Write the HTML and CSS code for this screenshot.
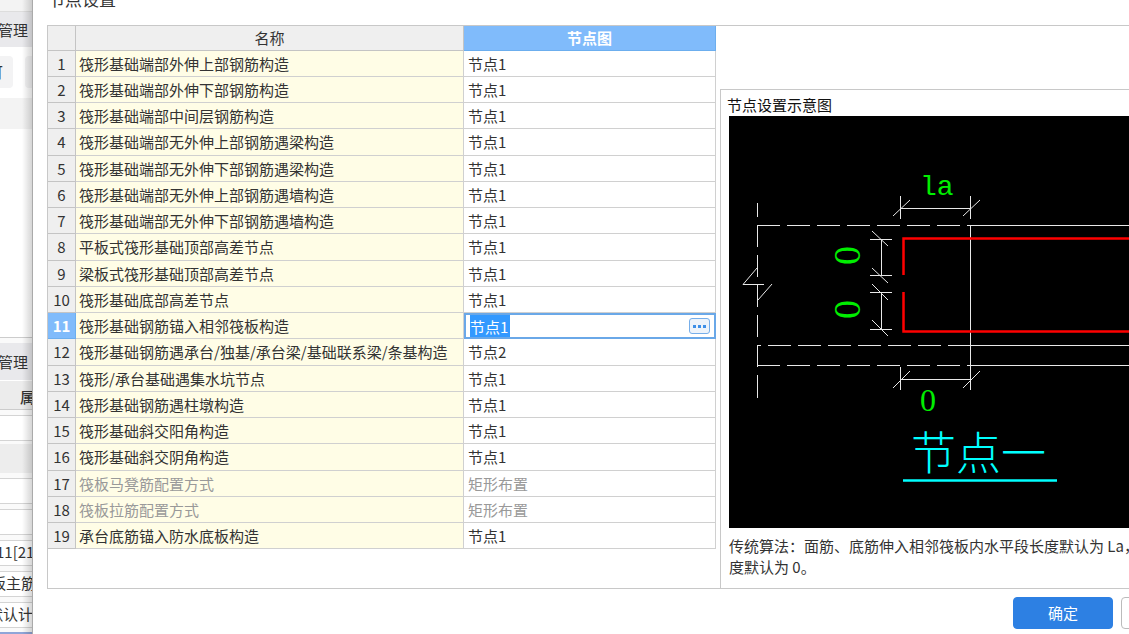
FILE: index.html
```html
<!DOCTYPE html>
<html lang="zh-CN">
<head>
<meta charset="utf-8">
<title>节点设置</title>
<link rel="stylesheet" href="styles.css">
</head>
<body>
<div class="app">
  <aside class="side">
    <div class="side-top"></div>
    <div class="side-title">管理</div>
    <div class="side-tabs"><span class="tab">可</span><span class="tab"></span></div>
    <div class="side-band"></div>
    <div class="side-space"></div>
    <div class="side-title side-title-low">管理</div>
    <div class="side-head">属</div>
    <div class="prop"></div>
    <div class="prop prop-gray"></div>
    <div class="prop"></div>
    <div class="prop"></div>
    <div class="prop prop-num">11[21]</div>
    <div class="prop prop-bar">板主筋</div>
    <div class="prop prop-calc">默认计算</div>
    <div class="side-end"></div>
  </aside>
  <main class="dialog">
    <header class="dialog-head"><h1 class="dialog-title">节点设置</h1></header>
    <section class="frame">
      <table class="grid">
        <colgroup><col class="col-no"><col class="col-name"><col class="col-node"></colgroup>
        <thead><tr><th></th><th>名称</th><th class="active">节点图</th></tr></thead>
        <tbody>
          <tr><th>1</th><td>筏形基础端部外伸上部钢筋构造</td><td>节点1</td></tr>
          <tr><th>2</th><td>筏形基础端部外伸下部钢筋构造</td><td>节点1</td></tr>
          <tr><th>3</th><td>筏形基础端部中间层钢筋构造</td><td>节点1</td></tr>
          <tr><th>4</th><td>筏形基础端部无外伸上部钢筋遇梁构造</td><td>节点1</td></tr>
          <tr><th>5</th><td>筏形基础端部无外伸下部钢筋遇梁构造</td><td>节点1</td></tr>
          <tr><th>6</th><td>筏形基础端部无外伸上部钢筋遇墙构造</td><td>节点1</td></tr>
          <tr><th>7</th><td>筏形基础端部无外伸下部钢筋遇墙构造</td><td>节点1</td></tr>
          <tr><th>8</th><td>平板式筏形基础顶部高差节点</td><td>节点1</td></tr>
          <tr><th>9</th><td>梁板式筏形基础顶部高差节点</td><td>节点1</td></tr>
          <tr><th>10</th><td>筏形基础底部高差节点</td><td>节点1</td></tr>
          <tr><th class="active">11</th><td>筏形基础钢筋锚入相邻筏板构造</td><td class="edit"><div class="editor"><input class="edit-input" type="text" value="节点1" aria-label="节点图"><button class="more" type="button" aria-label="更多"><svg width="13" height="3" viewBox="0 0 13 3"><path d="M0 0h3v3H0zM5 0h3v3H5zM10 0h3v3h-3z" fill="#3d8fe8"/></svg></button></div></td></tr>
          <tr><th>12</th><td>筏形基础钢筋遇承台/独基/承台梁/基础联系梁/条基构造</td><td>节点2</td></tr>
          <tr><th>13</th><td>筏形/承台基础遇集水坑节点</td><td>节点1</td></tr>
          <tr><th>14</th><td>筏形基础钢筋遇柱墩构造</td><td>节点1</td></tr>
          <tr><th>15</th><td>筏形基础斜交阳角构造</td><td>节点1</td></tr>
          <tr><th>16</th><td>筏形基础斜交阴角构造</td><td>节点1</td></tr>
          <tr class="off"><th>17</th><td>筏板马凳筋配置方式</td><td>矩形布置</td></tr>
          <tr class="off"><th>18</th><td>筏板拉筋配置方式</td><td>矩形布置</td></tr>
          <tr><th>19</th><td>承台底筋锚入防水底板构造</td><td>节点1</td></tr>
        </tbody>
      </table>
      <section class="preview">
        <h2 class="preview-title">节点设置示意图</h2>
        <svg class="drawing" role="img" aria-label="节点一">
          <g transform="translate(-729 -116)" fill="none" stroke="#e8e8e8">
            <path d="M757.5 203v14M757.5 225v22M757.5 255v22M757.5 285v22M757.5 315v22M757.5 345v22M757.5 375v23"/>
            <path d="M757 225.5h23m7 0h23m7 0h23m7 0h23m7 0h23m7 0h23m7 0h23m7 0H3000"/>
            <path d="M757 345.5h4m7 0h23m7 0h23m7 0h23m7 0h23m7 0h23m7 0h23m7 0H3000"/>
            <path d="M757 365.5h23m7 0h23m7 0h23m7 0h23m7 0h23m7 0h23m7 0h23m7 0H3000"/>
            <path d="M970.5 225v165M900.5 196v23M970.5 196v23M900.5 208.5h70M893 216l17-16M963 216l17-16"/>
            <path d="M900.5 367v23M900.5 379.5h70M893 388l17-17M963 388l17-17"/>
            <path d="M881.5 239v37M870 239.5h22M870 275.5h22M872 231l16 15M872 268l16 15"/>
            <path d="M881.5 292v38M870 292.5h22M870 329.5h22M872 284l16 16M872 320l16 16"/>
            <path d="M757 268l-14 16.500h21M772 284l-14 16"/>
            <path d="M903.500 275v-36.500H3000M903.500 292v39.500H3000" stroke="#f00" stroke-width="2.500"/>
            <path d="M903 480.500h154" stroke="#0ff" stroke-width="2.500"/>
          </g>
          <g transform="translate(-729 -116)">
            <text class="dim dim-mono" x="920" y="195">la</text>
            <text class="dim" x="920" y="411">0</text>
            <text class="dim dim-side" transform="translate(860 265) rotate(-90)">0</text>
            <text class="dim dim-side" transform="translate(860 319) rotate(-90)">0</text>
            <text class="caption" x="911" y="470">节点一</text>
          </g>
        </svg>
        <div class="note"><p>传统算法：面筋、底筋伸入相邻筏板内水平段长度默认为 La，</p><p>度默认为 0。</p></div>
      </section>
    </section>
    <footer class="actions">
      <button class="btn btn-ok" type="button">确定</button>
      <button class="btn btn-more" type="button" aria-label="取消"></button>
    </footer>
  </main>
</div>
</body>
</html>
```
FILE: styles.css
```css
* { box-sizing: border-box; }
body { margin: 0; overflow: hidden; background: #fff; color: #333; font: 15px/20px "Noto Sans CJK SC", "Noto Sans", sans-serif; }
h1, h2, p { margin: 0; font-weight: 400; }
.app { display: flex; min-height: 100vh; }

.side { position: relative; width: 33px; flex: none; overflow: hidden; white-space: nowrap; background: #fafafa; border-right: 1px solid #aaa; }
.side > div { margin-left: -12px; }
.side::after { content: ""; position: absolute; inset: 0 0 0 auto; width: 10px; background: linear-gradient(to right, rgba(0,0,0,0), rgba(0,0,0,.16)); }
.side-top { height: 12px; background: #f3f3f3; border-bottom: 1px solid #ddd; }
.side-title { height: 35px; padding: 8px 0 0 10px; background: #e9e9ec; }
.side-tabs { display: flex; gap: 12px; height: 51px; padding: 9px 0 10px; background: #fff; }
.tab { flex: none; width: 25px; padding: 6px 0 0; border-radius: 4px; background: #f3f3f4; }
.side-band { height: 31px; background: #f3f3f3; }
.side-space { height: 209px; background: #fff; border-bottom: 1px solid #ccc; }
.side-title-low { height: 38px; margin-top: 5px; padding-top: 9px; border-bottom: 1px solid #fff; }
.side-head { height: 29px; padding: 6px 0 0 32px; background: #ececec; border-bottom: 1px solid #ccc; font-weight: 500; }
.prop { height: 26px; margin-top: 5px; padding: 1px 0; border: solid #d4d4d4; border-width: 1px 0; background: #fff; }
.prop-gray { height: 29px; margin-top: 3px; border-color: #ededed; background: #ededed; }
.prop-num { padding-left: 8px; }
.prop-bar { padding-left: 3px; }
.side-end { height: 2px; margin-top: 4px; background: #8fa5d8; }

.dialog { display: flex; flex: 1; flex-direction: column; min-width: 0; }
.dialog-head { height: 25px; padding-left: 15px; overflow: hidden; }
.dialog-title { margin-top: -13px; font-size: 17px; line-height: 24px; }
.frame { display: flex; align-items: flex-start; gap: 4px; margin-left: 14px; border: solid #c8c8c8; border-width: 1px 0 1px 1px; }

.grid { flex: none; width: 668px; table-layout: fixed; border-collapse: separate; border-spacing: 0; }
.col-no { width: 28px; }
.col-name { width: 388px; }
.col-node { width: 252px; }
.grid th, .grid td { height: 26px; padding: 0 4px; border: solid #d0d0d0; border-width: 0 1px 1px 0; text-align: left; font-weight: 400; white-space: nowrap; }
.grid tr:nth-child(4n) td { height: 27px; }
.grid td:nth-child(2) { padding-left: 3px; background: #fffde6; }
.grid th { padding: 0; background: #efefef; border-color: #c4c4c4; text-align: center; }
.grid thead th { height: 25px; }
.grid th.active { background: #80bbfb; border-color: #6caeee; color: #fff; font-weight: 700; }
.grid .off td { color: #999; }
.grid td.edit { padding: 0; border: 0; }
.editor { display: flex; align-items: center; justify-content: space-between; height: 26px; padding: 0 4px; border: 2px solid #6aa8e8; background: #fff; }
.edit-input { width: 40px; height: 22px; padding: 0; border: 0; background: #3399ff; color: #fff; font: inherit; }
.more { display: flex; align-items: center; justify-content: center; width: 21px; height: 16px; padding: 0; border: 1px solid #76aeea; border-radius: 3px; background: #edf3fa; }

.preview { flex: 1; min-width: 0; margin-top: 63px; padding: 5px 0 11px 8px; overflow: hidden; border: solid #c8c8c8; border-width: 1px 0 0 1px; }
.preview-title { margin-left: -2px; padding-bottom: 1px; font-size: 15px; color: #111; }
.drawing { display: block; width: 100%; height: 412px; background: #000; }
.dim { fill: #0e0; font: 32px "Liberation Serif", serif; }
.dim-mono { font: 28px "Liberation Mono", monospace; }
.dim-side { font-size: 38px; }
.caption { fill: #0ff; font: 300 45px "Noto Sans CJK SC", sans-serif; }
.note { padding-top: 7px; line-height: 21px; white-space: nowrap; }

.actions { display: flex; justify-content: flex-end; gap: 8px; margin-right: -92px; padding-top: 8px; }
.btn { width: 100px; height: 32px; border: 1px solid #bbb; border-radius: 4px; background: #fff; font: inherit; }
.btn-ok { border-color: #2d80e3; background: #2d80e3; color: #fff; }
```
